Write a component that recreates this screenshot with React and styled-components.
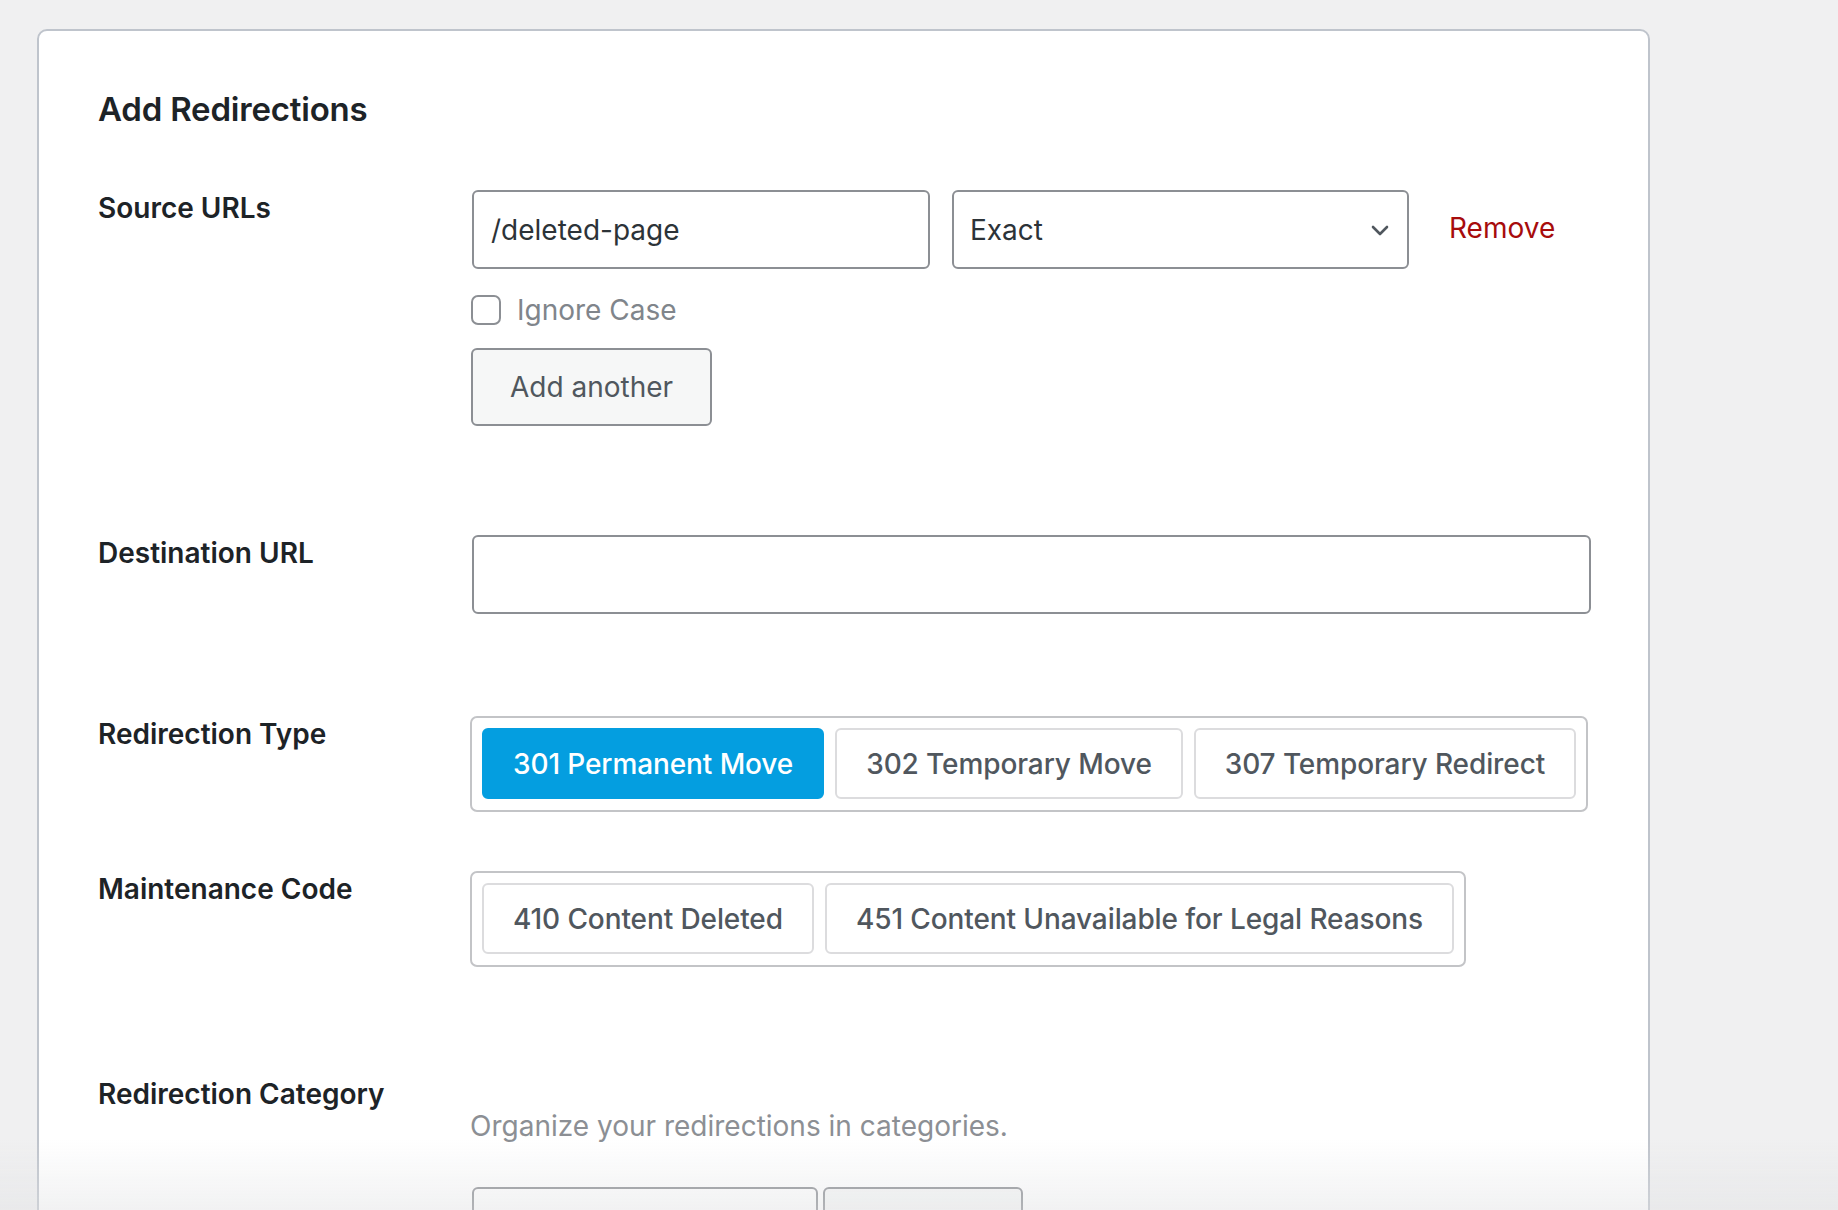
import React from 'react';
import styled, { createGlobalStyle } from 'styled-components';

const GlobalStyle = createGlobalStyle`
  html, body {
    margin: 0;
    padding: 0;
    background: #f0f0f1;
    font-family: Inter, "Noto Sans", sans-serif;
    color: #1d2327;
    overflow: hidden;
  }
`;

const Page = styled.div`
  height: 1210px;
  padding: 29px 0 0 37px;
  box-sizing: border-box;
`;

const Card = styled.section`
  width: 1613px;
  min-height: 1300px;
  box-sizing: border-box;
  background: #fff;
  border: 2px solid #bfc4cc;
  border-radius: 10px;
  padding: 56px 60px 0 59px;
`;

const Title = styled.h1`
  font-size: 33px;
  line-height: 44px;
  font-weight: 600;
  margin: 0 0 59px 0;
  letter-spacing: -0.2px;
`;

const Row = styled.div`
  display: grid;
  grid-template-columns: 374px 1fr;
  align-items: start;
  padding-bottom: ${({ $gap }) => $gap}px;
`;

const Label = styled.div`
  font-size: 28px;
  font-weight: 600;
  line-height: 36px;
  color: #1d2327;
`;

const Controls = styled.div`
  display: flex;
  flex-direction: column;
  align-items: flex-start;
  padding-top: ${({ $offset }) => $offset || 0}px;
`;

const InlineRow = styled.div`
  display: flex;
  align-items: center;
  gap: ${({ $gap }) => $gap || 22}px;
`;

const TextInput = styled.div`
  width: ${({ $w }) => $w}px;
  height: 79px;
  box-sizing: border-box;
  border: 2px solid #8c8f94;
  border-radius: 6px;
  padding: 0 17px;
  display: flex;
  align-items: center;
  font-size: 28px;
  color: #2c3338;
  background: ${({ $muted }) => ($muted ? '#f6f7f7' : '#fff')};
`;

const Select = styled(TextInput)`
  justify-content: space-between;
  padding: 0 18px 0 16px;
`;

const RemoveLink = styled.a`
  color: #a70c0c;
  font-size: 28px;
  margin-left: 18px;
  margin-top: -4px;
  cursor: pointer;
`;

const CheckRow = styled.label`
  display: flex;
  align-items: center;
  gap: 16px;
  height: 30px;
  margin: 26px 0 23px -1px;
  font-size: 28px;
  line-height: 30px;
  color: #80858b;
`;

const Box = styled.span`
  width: 30px;
  height: 30px;
  box-sizing: border-box;
  border: 2px solid #8c8f94;
  border-radius: 7px;
`;

const SecondaryButton = styled.button`
  width: 241px;
  height: 78px;
  margin-left: -1px;
  box-sizing: border-box;
  border: 2px solid #8c8f94;
  border-radius: 6px;
  background: #f6f7f7;
  color: #50575e;
  font-family: inherit;
  font-size: 28px;
`;

const Group = styled.div`
  display: flex;
  gap: 11px;
  padding: 10px 10px 11px 10px;
  margin-left: -2px;
  border: 2px solid #c3c4c7;
  border-radius: 7px;
`;

const Choice = styled.button`
  flex-shrink: 0;
  white-space: nowrap;
  height: 71px;
  padding: 0 29px;
  box-sizing: border-box;
  border: 2px solid ${({ $active }) => ($active ? '#049ee0' : '#dcdcde')};
  border-radius: 6px;
  background: ${({ $active }) => ($active ? '#049ee0' : '#fff')};
  color: ${({ $active }) => ($active ? '#fff' : '#50575e')};
  font-family: inherit;
  font-size: 28px;
  font-weight: 500;
  letter-spacing: -0.1px;
`;

const Description = styled.p`
  margin: 0 0 46px -2px;
  font-size: 28px;
  line-height: 30px;
  color: #8c8f94;
`;

const Fade = styled.div`
  position: fixed;
  left: 0;
  right: 0;
  bottom: 0;
  height: 70px;
  background: linear-gradient(rgba(240, 240, 241, 0), rgba(225, 226, 228, 0.45));
  pointer-events: none;
`;

const Chevron = () => (
  <svg width="18" height="12" viewBox="0 0 18 12" fill="none">
    <path d="M2 3l7 7 7-7" stroke="#50575e" strokeWidth="2.6" strokeLinecap="round" strokeLinejoin="round" />
  </svg>
);

const App = () => (
  <Page>
    <GlobalStyle />
    <Card>
      <Title>Add Redirections</Title>

      <Row $gap={109}>
        <Label>Source URLs</Label>
        <Controls>
          <InlineRow>
            <TextInput $w={458}>/deleted-page</TextInput>
            <Select $w={457}>
              Exact
              <Chevron />
            </Select>
            <RemoveLink>Remove</RemoveLink>
          </InlineRow>
          <CheckRow>
            <Box />
            Ignore Case
          </CheckRow>
          <SecondaryButton>Add another</SecondaryButton>
        </Controls>
      </Row>

      <Row $gap={102}>
        <Label>Destination URL</Label>
        <Controls>
          <TextInput $w={1119} />
        </Controls>
      </Row>

      <Row $gap={59}>
        <Label>Redirection Type</Label>
        <Controls>
          <Group>
            <Choice $active>301 Permanent Move</Choice>
            <Choice>302 Temporary Move</Choice>
            <Choice>307 Temporary Redirect</Choice>
          </Group>
        </Controls>
      </Row>

      <Row $gap={109}>
        <Label>Maintenance Code</Label>
        <Controls>
          <Group>
            <Choice>410 Content Deleted</Choice>
            <Choice>451 Content Unavailable for Legal Reasons</Choice>
          </Group>
        </Controls>
      </Row>

      <Row $gap={0}>
        <Label>Redirection Category</Label>
        <Controls $offset={35}>
          <Description>Organize your redirections in categories.</Description>
          <InlineRow $gap={5}>
            <TextInput $w={346} />
            <TextInput $w={200} $muted />
          </InlineRow>
        </Controls>
      </Row>
    </Card>
    <Fade />
  </Page>
);

export default App;
